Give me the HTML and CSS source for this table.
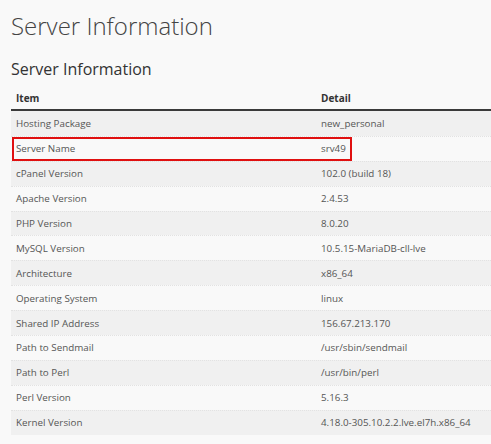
FILE: index.html
```html
<!DOCTYPE html>
<html>
<head>
<meta charset="utf-8">
<link rel="stylesheet" href="styles.css">
</head>
<body>
<h1 class="title">Server Information</h1>
<h2 class="subtitle">Server Information</h2>
<div class="table">
  <div class="row head"><div class="cell">Item</div><div class="cell">Detail</div></div>
  <div class="row"><div class="cell">Hosting Package</div><div class="cell">new_personal</div></div>
  <div class="row marked"><div class="cell">Server Name</div><div class="cell">srv49</div><span class="highlight"></span></div>
  <div class="row"><div class="cell">cPanel Version</div><div class="cell">102.0 (build 18)</div></div>
  <div class="row"><div class="cell">Apache Version</div><div class="cell">2.4.53</div></div>
  <div class="row"><div class="cell">PHP Version</div><div class="cell">8.0.20</div></div>
  <div class="row"><div class="cell">MySQL Version</div><div class="cell">10.5.15-MariaDB-cll-lve</div></div>
  <div class="row"><div class="cell">Architecture</div><div class="cell">x86_64</div></div>
  <div class="row"><div class="cell">Operating System</div><div class="cell">linux</div></div>
  <div class="row"><div class="cell">Shared IP Address</div><div class="cell">156.67.213.170</div></div>
  <div class="row"><div class="cell">Path to Sendmail</div><div class="cell">/usr/sbin/sendmail</div></div>
  <div class="row"><div class="cell">Path to Perl</div><div class="cell">/usr/bin/perl</div></div>
  <div class="row"><div class="cell">Perl Version</div><div class="cell">5.16.3</div></div>
  <div class="row"><div class="cell">Kernel Version</div><div class="cell">4.18.0-305.10.2.2.lve.el7h.x86_64</div></div>
</div>
</body>
</html>
```
FILE: styles.css
```css
html, body {
  margin: 0;
  padding: 0;
  background: #f9f9f9;
}
body {
  padding: 10px 0 0 11px;
  font-family: "Open Sans", "DejaVu Sans", sans-serif;
  color: #555;
}
.title {
  margin: 0;
  font-size: 24px;
  font-weight: 300;
  line-height: 32px;
  color: #444;
}
.subtitle {
  margin: 16px 0 0 0;
  font-size: 16px;
  font-weight: 400;
  line-height: 22px;
  color: #333;
}
.table {
  margin-top: 5px;
}
.row {
  position: relative;
  display: grid;
  grid-template-columns: 305px 1fr;
  height: 24.9px;
  align-items: center;
  font-size: 9.8px;
  border-top: 1px dotted #e2e2e2;
  box-sizing: border-box;
}
.row:nth-child(even) {
  background: #f0f0f0;
}
.row:nth-child(odd) {
  background: #f9f9f9;
}
.row.head {
  background: transparent;
  border-top: none;
  border-bottom: 2px solid #3a3a3a;
  height: 26px;
  font-size: 10px;
  font-weight: 700;
  color: #333;
  padding-top: 2px;
}
.row.head + .row {
  border-top: none;
}
.cell {
  padding-left: 5px;
  white-space: nowrap;
}
.highlight {
  position: absolute;
  left: 1px;
  top: 0px;
  width: 340px;
  height: 24px;
  border: 2px solid #e01010;
  box-sizing: border-box;
}
```
